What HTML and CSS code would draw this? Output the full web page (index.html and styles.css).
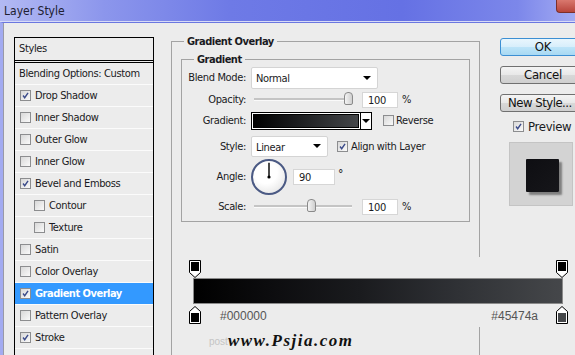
FILE: index.html
```html
<!DOCTYPE html>
<html lang="en">
<head>
    <meta charset="UTF-8">
    <title>Layer Style</title>
    <link rel="stylesheet" href="styles.css">
</head>
<body>
    <div class="titlebar">
        <span class="title">Layer Style</span>
        <span class="close"></span>
    </div>

    <div class="frame">
        <div class="panel">
            <div class="panel-head">Styles</div>
            <div class="row">Blending Options: Custom</div>
            <div class="row"><span class="cb on"><svg viewBox="0 0 11 11"><path d="M2.5 5.5 L4.5 8.2 L8.6 2.2"/></svg></span>Drop Shadow</div>
            <div class="row"><span class="cb"></span>Inner Shadow</div>
            <div class="row"><span class="cb"></span>Outer Glow</div>
            <div class="row"><span class="cb"></span>Inner Glow</div>
            <div class="row"><span class="cb on"><svg viewBox="0 0 11 11"><path d="M2.5 5.5 L4.5 8.2 L8.6 2.2"/></svg></span>Bevel and Emboss</div>
            <div class="row sub"><span class="cb"></span>Contour</div>
            <div class="row sub"><span class="cb"></span>Texture</div>
            <div class="row"><span class="cb"></span>Satin</div>
            <div class="row"><span class="cb"></span>Color Overlay</div>
            <div class="row selected"><span class="cb on"><svg viewBox="0 0 11 11"><path d="M2.5 5.5 L4.5 8.2 L8.6 2.2"/></svg></span>Gradient Overlay</div>
            <div class="row"><span class="cb"></span>Pattern Overlay</div>
            <div class="row"><span class="cb on"><svg viewBox="0 0 11 11"><path d="M2.5 5.5 L4.5 8.2 L8.6 2.2"/></svg></span>Stroke</div>
            <div class="row"></div>
        </div>

        <div class="content">
            <div class="top">
                <fieldset class="outer">
                    <legend>Gradient Overlay</legend>
                    <fieldset class="inner">
                        <legend>Gradient</legend>

                        <div class="field f-blend">
                            <span class="lbl">Blend Mode:</span>
                            <div class="select blend-select">Normal<span class="arrow"></span></div>
                        </div>

                        <div class="field f-opacity">
                            <span class="lbl">Opacity:</span>
                            <div class="slider"><span class="thumb" style="left: 94px"></span></div>
                            <div class="num">100</div>
                            <span class="unit">%</span>
                        </div>

                        <div class="field f-gradient">
                            <span class="lbl">Gradient:</span>
                            <div class="grad-pick">
                                <span class="grad-fill"></span>
                                <span class="grad-drop"><span class="arrow"></span></span>
                            </div>
                            <span class="cb reverse-cb"></span>
                            <span class="opt">Reverse</span>
                        </div>

                        <div class="field f-style">
                            <span class="lbl">Style:</span>
                            <div class="select style-select">Linear<span class="arrow"></span></div>
                            <span class="cb on align-cb"><svg viewBox="0 0 11 11"><path d="M2.5 5.5 L4.5 8.2 L8.6 2.2"/></svg></span>
                            <span class="opt">Align with Layer</span>
                        </div>

                        <div class="field f-angle">
                            <span class="lbl">Angle:</span>
                            <div class="dial">
                                <svg viewBox="0 0 36 36">
                                    <line x1="18" y1="18" x2="18" y2="2"/>
                                    <circle cx="18" cy="18" r="1.8"/>
                                </svg>
                            </div>
                            <div class="num angle-num">90</div>
                            <span class="deg">°</span>
                        </div>

                        <div class="field f-scale">
                            <span class="lbl">Scale:</span>
                            <div class="slider"><span class="thumb" style="left: 57px"></span></div>
                            <div class="num">100</div>
                            <span class="unit">%</span>
                        </div>
                    </fieldset>
                </fieldset>

                <div class="side">
                    <div class="btn btn-ok">OK</div>
                    <div class="btn">Cancel</div>
                    <div class="btn btn-new">New Style...</div>
                    <div class="preview-check">
                        <span class="cb on"><svg viewBox="0 0 11 11"><path d="M2.5 5.5 L4.5 8.2 L8.6 2.2"/></svg></span>
                        <span>Preview</span>
                    </div>
                    <div class="preview-box"><span class="swatch"></span></div>
                </div>
            </div>

            <div class="editor">
                <div class="stops stops-top">
                    <svg class="stop" viewBox="0 0 12 18"><path class="edge" d="M0.5 0.5 H11.5 V12.5 L6 17.5 L0.5 12.5 Z"/><rect x="2" y="2" width="8" height="9" fill="#000"/></svg>
                    <svg class="stop" viewBox="0 0 12 18"><path class="edge" d="M0.5 0.5 H11.5 V12.5 L6 17.5 L0.5 12.5 Z"/><rect x="2" y="2" width="8" height="9" fill="#000"/></svg>
                </div>
                <div class="bar"></div>
                <div class="stops stops-bottom">
                    <svg class="stop" viewBox="0 0 12 18"><path class="edge" d="M6 0.5 L11.5 5.5 V17.5 H0.5 V5.5 Z"/><rect x="2" y="7" width="8" height="9" fill="#000"/></svg>
                    <span class="hex hex-left">#000000</span>
                    <span class="hex hex-right">#45474a</span>
                    <svg class="stop" viewBox="0 0 12 18"><path class="edge" d="M6 0.5 L11.5 5.5 V17.5 H0.5 V5.5 Z"/><rect x="2" y="7" width="8" height="9" fill="#45474a"/></svg>
                </div>
            </div>

            <div class="tail">
                <span class="faint">post</span>
                <span class="mark">www.Psjia.com</span>
            </div>
        </div>
    </div>
</body>
</html>
```

FILE: styles.css
```css
body {
    margin: 0;
    width: 575px;
    height: 355px;
    overflow: hidden;
    background: #ececec;
    font-family: "DejaVu Sans Condensed", "DejaVu Sans", sans-serif;
    font-size: 11px;
    letter-spacing: -0.35px;
    color: #1a1a22;
}

/* title bar */
.titlebar {
    height: 21px;
    display: flex;
    align-items: center;
    justify-content: space-between;
    background: linear-gradient(90deg, #b3baf3 0%, #8c96ec 18%, #6e7ae6 40%, #6571e4 70%, #7c87ea 90%, #a3abf3 100%);
    border-bottom: 1px solid #d7dbf7;
}
.title {
    margin-left: 4px;
    font-size: 12px;
    letter-spacing: 0;
    color: #202030;
}
.close {
    align-self: flex-start;
    width: 18px;
    height: 12px;
    background: linear-gradient(#d9786e, #b8453c);
    border-bottom-left-radius: 4px;
    border: 1px solid #7d2f2a;
    border-top: none;
    border-right: none;
}

/* window body */
.frame {
    display: flex;
    height: 333px;
    border-top: 1px solid #6b77e0;
    border-left: 3px solid #a3abf1;
    box-shadow: inset 1px 0 #9a9aa6;
    padding: 14px 0 0 11px;
    box-sizing: border-box;
}

/* styles list */
.panel {
    flex: none;
    width: 138px;
    height: 330px;
    border: 1px solid #000;
}
.panel-head {
    height: 22px;
    line-height: 22px;
    padding-left: 4px;
    border-bottom: 3px double #000;
}
.row {
    height: 21px;
    display: flex;
    align-items: center;
    padding-left: 5px;
    border-bottom: 1px solid #fbfbfb;
    white-space: nowrap;
}
.row:nth-child(2) {
    padding-left: 4px;
}
.row.sub {
    padding-left: 19px;
}
.row.selected {
    background: #3399ff;
    color: #fff;
    font-weight: bold;
    letter-spacing: -0.5px;
}

/* checkbox */
.cb {
    flex: none;
    width: 9px;
    height: 9px;
    margin-right: 4px;
    border: 1px solid #8c8d8f;
    background: linear-gradient(135deg, #d8d8d8, #fafafa);
    display: inline-flex;
}
.cb svg {
    width: 9px;
    height: 9px;
}
.cb path {
    fill: none;
    stroke: #3b4b8a;
    stroke-width: 1.7;
}

/* center column */
.content {
    margin-left: 17px;
    width: 404px;
    display: flex;
    flex-direction: column;
}
.top {
    display: flex;
    margin-top: -2px;
}
fieldset {
    margin: 0;
    border: 1px solid #a3a3a3;
    min-width: 0;
}
legend {
    font-weight: bold;
    letter-spacing: -0.5px;
    line-height: 13px;
    padding: 0 3px;
}
.outer {
    width: 309px;
    height: 222px;
    box-sizing: border-box;
    padding: 0 0 0 9px;
    border-bottom: none;
}
.outer > legend {
    margin-left: 3px;
}
.inner {
    width: 289px;
    box-sizing: border-box;
    margin-top: 5px;
    padding: 0;
}
.inner > legend {
    margin-left: 12px;
}

.field {
    display: flex;
    align-items: center;
    white-space: nowrap;
}
.lbl {
    width: 64px;
    margin-right: 5px;
    text-align: right;
}
.f-blend { height: 23px; }
.f-opacity { height: 21px; }
.f-gradient { height: 21px; }
.f-style { height: 30px; }
.f-angle { height: 31px; }
.f-scale { height: 29px; }

.select {
    position: relative;
    height: 20px;
    line-height: 20px;
    padding-left: 4px;
    background: #fff;
    border: 1px solid #d4d4d4;
    border-radius: 2px;
    box-sizing: border-box;
}
.blend-select {
    width: 127px;
    height: 22px;
    line-height: 22px;
}
.style-select {
    width: 77px;
    height: 21px;
    line-height: 21px;
}
.arrow {
    position: absolute;
    right: 6px;
    top: 50%;
    margin-top: -2px;
    border-left: 4px solid transparent;
    border-right: 4px solid transparent;
    border-top: 4px solid #000;
}

.slider {
    position: relative;
    width: 98px;
    height: 2px;
    margin-left: 3px;
    background: #c4c4c4;
    border-bottom: 1px solid #fafafa;
}
.thumb {
    position: absolute;
    top: -6px;
    width: 7px;
    height: 11px;
    margin-left: -4px;
    border: 1px solid #8a8a8a;
    border-radius: 4px 4px 2px 2px;
    background: linear-gradient(90deg, #f4f4f4, #cfcfcf);
}
.num {
    width: 36px;
    height: 16px;
    line-height: 16px;
    margin-left: 10px;
    padding-left: 5px;
    box-sizing: border-box;
    background: #fff;
    border: 1px solid #d6d6d6;
}
.unit {
    margin-left: 4px;
}

.grad-pick {
    display: flex;
    width: 121px;
    height: 18px;
    border: 1px solid #000;
    box-sizing: border-box;
}
.grad-fill {
    flex: 1;
    background: linear-gradient(90deg, #000 0%, #1a1b1d 40%, #45474a 100%);
    border: 1px solid #fff;
    outline: 1px solid #000;
    outline-offset: -2px;
}
.grad-drop {
    position: relative;
    width: 10px;
    background: #fff;
    border-left: 1px solid #000;
}
.grad-drop .arrow {
    right: 1px;
}
.reverse-cb {
    margin-left: 11px;
    margin-right: 2px;
}
.align-cb {
    margin-left: 9px;
    margin-right: 3px;
}

.dial {
    width: 36px;
    height: 36px;
    box-sizing: border-box;
    border: 2px solid #4b5a84;
    border-radius: 50%;
    background: radial-gradient(circle at 40% 35%, #ffffff 40%, #dcdcdc 100%);
}
.dial svg {
    width: 32px;
    height: 32px;
    display: block;
}
.dial line {
    stroke: #000;
    stroke-width: 1.6;
}
.angle-num {
    width: 42px;
    margin-left: 6px;
}
.deg {
    margin-left: 3px;
    align-self: flex-start;
    margin-top: 6px;
    font-size: 12px;
}

/* right column */
.side {
    margin-left: 20px;
    padding-top: 3px;
    width: 75px;
}
.btn {
    width: 86px;
    height: 18px;
    line-height: 16px;
    box-sizing: border-box;
    margin-bottom: 10px;
    text-align: center;
    font-size: 13px;
    letter-spacing: -0.3px;
    color: #111;
    border: 1px solid #707070;
    border-radius: 3px;
    background: linear-gradient(#f4f4f4 0%, #e8e8e8 50%, #d8d8d8 51%, #cfcfcf 100%);
}
.btn-ok {
    border-color: #3c8fd3;
    background: linear-gradient(#e9f6fd 0%, #d7eefb 50%, #bde4f8 51%, #a8d9f3 100%);
}
.btn-new {
    text-align: left;
    padding-left: 7px;
    letter-spacing: -0.5px;
}
.preview-check {
    display: flex;
    align-items: center;
    margin: -2px 0 0 13px;
    height: 13px;
    font-size: 13px;
    letter-spacing: -0.3px;
}
.preview-box {
    width: 64px;
    height: 64px;
    margin: 9px 0 0 9px;
    box-sizing: border-box;
    padding: 16px;
    background: #d3d3d3;
    border: 1px solid #c4c4c4;
}
.swatch {
    display: block;
    width: 33px;
    height: 33px;
    border-radius: 1px;
    background: linear-gradient(135deg, #0e0e12, #16161a);
    box-shadow: 3px 3px 2px rgba(0, 0, 0, 0.4);
}

/* gradient editor */
.editor {
    height: 71px;
    box-sizing: border-box;
    padding: 3px 0 0 17px;
    border-left: 1px solid #a3a3a3;
}
.stops {
    display: flex;
    align-items: flex-start;
    width: 379px;
}
.stops-top {
    justify-content: space-between;
    height: 18px;
}
.stop {
    width: 12px;
    height: 18px;
    flex: none;
}
.stop .edge {
    fill: #fff;
    stroke: #000;
    stroke-width: 1;
}
.bar {
    width: 370px;
    height: 26px;
    margin-left: 4px;
    box-sizing: border-box;
    border: 1px solid #8a8a8a;
    background: linear-gradient(90deg, #000 0%, #0c0c0e 20%, #1a1b1e 45%, #2e3034 70%, #45474a 100%);
}
.stops-bottom {
    margin-top: 2px;
    height: 18px;
}
.hex {
    font-family: "Liberation Sans", Arial, sans-serif;
    font-size: 12px;
    letter-spacing: 0;
    color: #555;
    margin-top: 3px;
}
.hex-left {
    margin-left: 19px;
}
.hex-right {
    margin-left: auto;
    margin-right: 18px;
}

.tail {
    width: 309px;
    height: 28px;
    box-sizing: border-box;
    border-left: 1px solid #a3a3a3;
    border-right: 1px solid #a3a3a3;
    padding-left: 37px;
    display: flex;
    align-items: center;
    white-space: nowrap;
}
.faint {
    font-family: "Liberation Sans", Arial, sans-serif;
    font-size: 10px;
    letter-spacing: 0;
    color: #c4c4c4;
}
.mark {
    font-family: "Liberation Serif", serif;
    font-style: italic;
    font-weight: bold;
    font-size: 17px;
    letter-spacing: 1.5px;
    color: #111;
}
```
